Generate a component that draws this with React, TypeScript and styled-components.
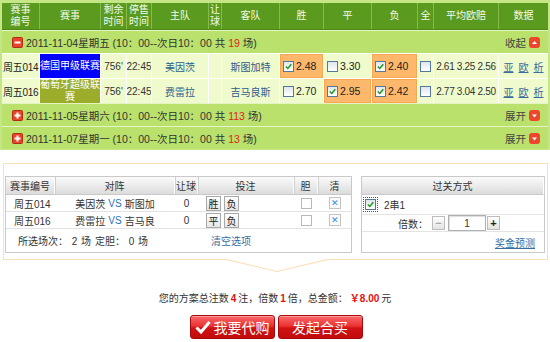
import React from 'react'
import styled, { createGlobalStyle } from 'styled-components'

const GlobalStyle = createGlobalStyle`
  html, body {
    margin: 0;
    padding: 0;
    background: #fff;
  }
  body {
    width: 550px;
    height: 342px;
    overflow: hidden;
    font-family: "Liberation Sans", "Noto Sans CJK SC", sans-serif;
    font-size: 10px;
    color: #333;
  }
`

const COLS = '38px 61px 26px 25px 57px 13px 58px 44px 48px 46px 16px 65px 49px'
const SLIP_COLS = '49px 120px 23px 96px 24px 33px'

const Board = styled.div`
  background: #c4e686;
  padding: 3px 2px 1px;
`

const HeadRow = styled.div`
  display: grid;
  grid-template-columns: ${COLS};
  height: 26px;
  background: #5a9a1e;
  border-bottom: 1px solid #4a8814;
`

const HeadCell = styled.div`
  display: flex;
  align-items: center;
  justify-content: center;
  text-align: center;
  line-height: 12px;
  color: #f3fae8;
  border-right: 1px solid #86bb4c;

  &:last-child {
    border-right: 0;
  }
`

const DateRow = styled.div`
  display: flex;
  align-items: center;
  height: 22px;
  padding: 0 8px 0 10px;
  background: #b9e16c;
  border-top: 1px solid #e4f4c4;
  font-size: 10.5px;
  color: #333;
`

const DateText = styled.span`
  margin-left: 3px;
  flex: 1;
  white-space: nowrap;
`

const Red = styled.span`
  color: #e0261b;
`

const Toggle = styled.span`
  display: flex;
  align-items: center;
  gap: 3px;
  color: #444;
`

const MatchRow = styled.div`
  display: grid;
  grid-template-columns: ${COLS};
  height: 24px;
  background: #effbcc;
  border-top: 1px solid #fff;
`

const Cell = styled.div<{ $align?: string }>`
  display: flex;
  align-items: center;
  justify-content: ${p => p.$align || 'center'};
  border-right: 1px solid #fff;
  white-space: nowrap;
  overflow: hidden;

  &:last-child {
    border-right: 0;
  }
`

const NoCell = styled(Cell)`
  padding-left: 1px;
  letter-spacing: -0.3px;
  color: #222;
`

const LeagueCell = styled.div<{ $bg: string }>`
  display: flex;
  align-items: center;
  justify-content: center;
  text-align: center;
  background: ${p => p.$bg};
  color: #fff;
  line-height: 12px;
  border-right: 1px solid #fff;
`

const Team = styled(Cell)`
  color: #2d5d8e;
`

const OddsCell = styled(Cell)<{ $on?: boolean }>`
  justify-content: flex-start;
  gap: 2px;
  padding-left: 3px;
  background: ${p => (p.$on ? '#fdb86b' : 'transparent')};
  box-shadow: ${p => (p.$on ? 'inset 0 0 0 1px #f8a650' : 'none')};
  color: #222;
  font-size: 10.5px;
`

const Avg = styled(Cell)`
  letter-spacing: -0.3px;
  color: #333;
`

const Links = styled(Cell)`
  gap: 5px;
`

const Link = styled.a<{ $plain?: boolean }>`
  color: #3a6c9e;
  text-decoration: ${p => (p.$plain ? 'none' : 'underline')};
  cursor: pointer;
`

const CheckBox = styled.span`
  display: inline-flex;
  align-items: center;
  justify-content: center;
  width: 9px;
  height: 9px;
  border: 1px solid #56789a;
  background: linear-gradient(#dfe6ee, #fff);
  flex: none;
`

const GreyBox = styled(CheckBox)`
  border-color: #b8b8b8;
  background: #fff;
`

const Bubble = styled.div`
  position: relative;
  display: flex;
  align-items: flex-start;
  gap: 9px;
  margin: 13px 2px 0 3px;
  padding: 12px 2px 6px 1px;
  border: 1px solid #fbdfb6;

  &::before,
  &::after {
    content: '';
    position: absolute;
    width: 0;
    height: 0;
    border-style: solid;
    border-color: transparent;
  }
  &::before {
    top: 100%;
    left: 218px;
    border-width: 13px 55px 0;
    border-top-color: #fbdfb6;
  }
  &::after {
    top: calc(100% - 1px);
    left: 219px;
    border-width: 13px 54px 0;
    border-top-color: #fff;
  }
`

const Slip = styled.div`
  width: 347px;
  box-sizing: border-box;
  border: 1px solid #c9c9c9;
`

const SlipHead = styled.div`
  display: grid;
  grid-template-columns: ${SLIP_COLS};
  height: 17px;
  background: linear-gradient(#fbfbfb, #dcdcdc);
  border-bottom: 1px solid #c9c9c9;
`

const GreyHead = styled.div`
  display: flex;
  align-items: center;
  justify-content: center;
  border-right: 1px solid #fff;
  box-shadow: 1px 0 0 #cfcfcf;
  color: #333;

  &:last-child {
    border-right: 0;
    box-shadow: none;
  }
`

const SlipRow = styled.div`
  display: grid;
  grid-template-columns: ${SLIP_COLS};
  height: 16px;
  border-bottom: 1px solid #e3e3e3;
  align-items: center;
`

const SlipCell = styled.div<{ $align?: string; $pad?: number }>`
  display: flex;
  align-items: center;
  justify-content: ${p => p.$align || 'center'};
  padding-left: ${p => p.$pad || 0}px;
  gap: 3px;
  white-space: nowrap;
`

const Vs = styled.span`
  color: #2a72c4;
`

const BetBtn = styled.span`
  display: inline-flex;
  align-items: center;
  justify-content: center;
  width: 13px;
  height: 13px;
  border: 1px solid #a8a8a8;
  background: linear-gradient(#fff, #e6e6e6);
  color: #222;
  font-size: 10px;
`

const ClearBtn = styled.span`
  display: inline-flex;
  align-items: center;
  justify-content: center;
  width: 10px;
  height: 10px;
  border: 1px solid #c4c4c4;
  background: #fafafa;
  color: #2f8ee0;
  font-size: 9px;
  line-height: 1;
`

const SlipFoot = styled.div`
  display: grid;
  grid-template-columns: 192px 1fr;
  height: 23px;
  align-items: center;
`

const FootText = styled.span`
  padding-left: 12px;
  word-spacing: 1px;
`

const Pass = styled.div`
  width: 184px;
  box-sizing: border-box;
  border: 1px solid #c9c9c9;
`

const PassHead = styled(GreyHead)`
  height: 17px;
  background: linear-gradient(#fbfbfb, #dcdcdc);
  border-bottom: 1px solid #c9c9c9;
`

const PassRow = styled.div<{ $h: number; $justify?: string }>`
  display: flex;
  align-items: center;
  justify-content: ${p => p.$justify || 'flex-start'};
  gap: 4px;
  height: ${p => p.$h}px;
  padding: 0 9px 0 1px;
  border-bottom: 1px solid #e3e3e3;

  &:last-child {
    border-bottom: 0;
  }
`

const FocusRing = styled.span`
  display: inline-flex;
  align-items: center;
  justify-content: center;
  width: 15px;
  height: 15px;
  outline: 1px dotted #555;
  outline-offset: -1px;
  margin-right: 2px;
`

const Stepper = styled.span<{ $dim?: boolean }>`
  display: inline-flex;
  align-items: center;
  justify-content: center;
  width: 11px;
  height: 12px;
  border: 1px solid #bdbdbd;
  background: linear-gradient(#fff, #e4e4e4);
  color: ${p => (p.$dim ? '#aaa' : '#222')};
  font-size: 11px;
  font-weight: bold;
`

const Times = styled.span`
  display: inline-flex;
  align-items: center;
  justify-content: center;
  width: 36px;
  height: 14px;
  border: 1px solid #b0b0b0;
  margin: 0 -3px 0 -1px;
  box-shadow: inset 1px 1px 1px #ddd;
`

const Summary = styled.div`
  margin-top: 32px;
  text-align: center;
  line-height: 14px;
  color: #333;
`

const Num = styled.b`
  color: #e01010;
  margin: 0 2px;
`

const Actions = styled.div`
  display: flex;
  justify-content: center;
  gap: 3px;
  margin-top: 9px;
  padding-left: 2px;
`

const BuyButton = styled.button`
  display: flex;
  align-items: center;
  justify-content: center;
  gap: 3px;
  width: 85px;
  height: 24px;
  padding: 0;
  border: 1px solid #a8090b;
  border-radius: 3px;
  background: linear-gradient(#f86a6a 0%, #ec3333 45%, #d01212 55%, #c20c0c 100%);
  color: #fff;
  font-family: "Noto Sans CJK SC", sans-serif;
  font-size: 14px;
  box-shadow: inset 0 1px 0 #ff9a9a;
`

function PlusMinus({ open }: { open: boolean }) {
  return (
    <svg width="11" height="11" viewBox="0 0 11 11">
      <rect x="0.5" y="0.5" width="10" height="10" rx="1" fill="#e8452c" stroke="#b02a14" />
      <rect x="2.5" y="4.5" width="6" height="2" fill="#fff" />
      {!open && <rect x="4.5" y="2.5" width="2" height="6" fill="#fff" />}
    </svg>
  )
}

function Arrow({ up }: { up: boolean }) {
  return (
    <svg width="11" height="11" viewBox="0 0 11 11">
      <rect x="0" y="0" width="11" height="11" rx="3" fill="#f0452d" />
      {up ? <path d="M3 7 L5.5 4 L8 7 Z" fill="#fff" /> : <path d="M3 4.5 L5.5 7.5 L8 4.5 Z" fill="#fff" />}
    </svg>
  )
}

function Check({ on }: { on?: boolean }) {
  return (
    <CheckBox>
      {on && (
        <svg width="7" height="7" viewBox="0 0 7 7">
          <path d="M0.8 3.5 L2.8 5.5 L6.3 1.2" fill="none" stroke="#1f9a22" strokeWidth="1.5" />
        </svg>
      )}
    </CheckBox>
  )
}

const matches = [
  {
    no: '014',
    league: '德国甲级联赛',
    bg: '#0000fd',
    home: '美因茨',
    away: '斯图加特',
    odds: [
      ['2.48', true],
      ['3.30', false],
      ['2.40', true],
    ] as [string, boolean][],
    avg: '2.61 3.25 2.56',
  },
  {
    no: '016',
    league: '葡萄牙超级联赛',
    bg: '#9cac2b',
    home: '费雷拉',
    away: '吉马良斯',
    odds: [
      ['2.70', false],
      ['2.95', true],
      ['2.42', true],
    ] as [string, boolean][],
    avg: '2.77 3.04 2.50',
  },
]

const slips = [
  { no: '014', home: '美因茨', away: '斯图加', picks: ['胜', '负'] },
  { no: '016', home: '费雷拉', away: '吉马良', picks: ['平', '负'] },
]

const heads = ['赛事\n编号', '赛事', '剩余\n时间', '停售\n时间', '主队', '让\n球', '客队', '胜', '平', '负', '全', '平均欧赔', '数据']

function DateLine({ date, count, open }: { date: string; count: number; open: boolean }) {
  return (
    <DateRow>
      <PlusMinus open={open} />
      <DateText>
        {date} (10：00--次日10：00 共 <Red>{count}</Red> 场)
      </DateText>
      <Toggle>
        {open ? '收起' : '展开'}
        <Arrow up={open} />
      </Toggle>
    </DateRow>
  )
}

export default function App() {
  return (
    <>
      <GlobalStyle />
      <Board>
        <HeadRow>
          {heads.map(h => (
            <HeadCell key={h}>
              {h.split('\n').map((line, i) => (
                <React.Fragment key={i}>
                  {i > 0 && <br />}
                  {line}
                </React.Fragment>
              ))}
            </HeadCell>
          ))}
        </HeadRow>
        <DateLine date="2011-11-04星期五" count={19} open />
        {matches.map(m => (
          <MatchRow key={m.no}>
            <NoCell $align="flex-start">周五{m.no}</NoCell>
            <LeagueCell $bg={m.bg}>{m.league}</LeagueCell>
            <Cell>756'</Cell>
            <Cell>22:45</Cell>
            <Team>{m.home}</Team>
            <Cell />
            <Team>{m.away}</Team>
            {m.odds.map(([v, on]) => (
              <OddsCell key={v} $on={on}>
                <Check on={on} />
                {v}
              </OddsCell>
            ))}
            <Cell>
              <Check />
            </Cell>
            <Avg>{m.avg}</Avg>
            <Links>
              <Link>亚</Link>
              <Link>欧</Link>
              <Link>析</Link>
            </Links>
          </MatchRow>
        ))}
        <DateLine date="2011-11-05星期六" count={113} open={false} />
        <DateLine date="2011-11-07星期一" count={13} open={false} />
      </Board>

      <Bubble>
        <Slip>
          <SlipHead>
            {['赛事编号', '对阵', '让球', '投注', '胆', '清'].map(h => (
              <GreyHead key={h}>{h}</GreyHead>
            ))}
          </SlipHead>
          {slips.map(s => (
            <SlipRow key={s.no}>
              <SlipCell $align="flex-start" $pad={8}>
                周五{s.no}
              </SlipCell>
              <SlipCell>
                {s.home} <Vs>VS</Vs> {s.away}
              </SlipCell>
              <SlipCell>0</SlipCell>
              <SlipCell $align="flex-start" $pad={8}>
                {s.picks.map(p => (
                  <BetBtn key={p}>{p}</BetBtn>
                ))}
              </SlipCell>
              <SlipCell>
                <GreyBox />
              </SlipCell>
              <SlipCell>
                <ClearBtn>✕</ClearBtn>
              </SlipCell>
            </SlipRow>
          ))}
          <SlipFoot>
            <FootText>所选场次： 2 场 定胆： 0 场</FootText>
            <SlipCell $align="flex-start" $pad={13}>
              <Link $plain>清空选项</Link>
            </SlipCell>
          </SlipFoot>
        </Slip>

        <Pass>
          <PassHead>过关方式</PassHead>
          <PassRow $h={19}>
            <FocusRing>
              <Check on />
            </FocusRing>
            2串1
          </PassRow>
          <PassRow $h={16} $justify="center">
            倍数：
            <Stepper $dim>−</Stepper>
            <Times>1</Times>
            <Stepper>+</Stepper>
          </PassRow>
          <PassRow $h={20} $justify="flex-end">
            <Link>奖金预测</Link>
          </PassRow>
        </Pass>
      </Bubble>

      <Summary>
        您的方案总注数<Num>4</Num>注，倍数<Num>1</Num>倍，总金额：
        <Num>￥8.00</Num>元
      </Summary>

      <Actions>
        <BuyButton>
          <svg width="16" height="14" viewBox="0 0 16 14">
            <path d="M1.5 7.5 L6 12 L14.5 2" fill="none" stroke="#fff" strokeWidth="3" />
          </svg>
          我要代购
        </BuyButton>
        <BuyButton>发起合买</BuyButton>
      </Actions>
    </>
  )
}
